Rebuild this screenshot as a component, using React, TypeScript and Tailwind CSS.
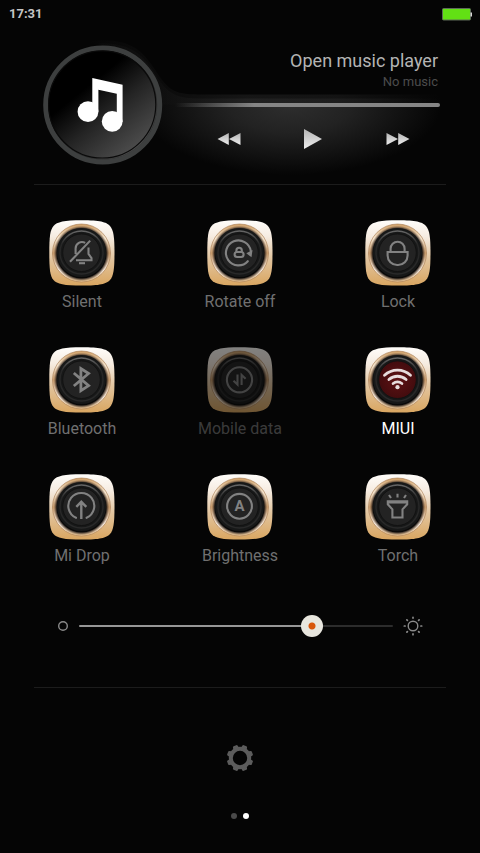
import { useState, type ReactNode } from "react";
import clsx from "clsx";

type Toggle = {
  label: string;
  state: "off" | "on" | "disabled";
  icon: ReactNode;
};

const toggles: Toggle[] = [
  {
    label: "Silent",
    state: "off",
    icon: (
      <>
        <path d="M26.600 34v-5.500a6.400 6.400 0 0 1 9.600-5.600M39.500 27.500V34l3 4v2.200H27M21 41.800 41.200 20.600" />
        <path d="M30 43.200h6" />
      </>
    ),
  },
  {
    label: "Rotate off",
    state: "off",
    icon: (
      <>
        <path d="M40.800 41.200A12.500 12.500 0 1 1 43.800 31" strokeLinecap="round" />
        <path d="M39.300 33.300 45.500 30 44.500 37.300z" fill="currentColor" stroke="none" />
        <rect x="27.600" y="32" width="9" height="5" rx="2.500" />
        <path d="M29.400 32v-1.600a2.700 2.700 0 0 1 5.400 0V32" />
      </>
    ),
  },
  {
    label: "Lock",
    state: "off",
    icon: (
      <path d="M25.600 32v-3.200a7 7 0 0 1 14 0V32M22.600 32h20v3.500a9.500 9.500 0 0 1-9.500 9.500h-1a9.500 9.500 0 0 1-9.500-9.500z" />
    ),
  },
  {
    label: "Bluetooth",
    state: "off",
    icon: <path d="M24.800 26 39.600 38.600 31.900 43.600V21.500l7.700 5L24.800 39" strokeWidth="2.800" />,
  },
  {
    label: "Mobile data",
    state: "disabled",
    icon: (
      <>
        <circle cx="32.500" cy="32.800" r="12.600" />
        <path d="M30.500 27.500v10l-4-3.800M34.600 38V28l4 3.800" />
      </>
    ),
  },
  {
    label: "MIUI",
    state: "on",
    icon: (
      <>
        <path
          d="M19.500 28.200a19 19 0 0 1 26 0M23.900 32.500a13 13 0 0 1 17.200 0M28.100 36.500a7 7 0 0 1 8.800 0"
          strokeWidth="2.800"
          strokeLinecap="round"
        />
        <circle cx="32.500" cy="40.200" r="2.100" fill="currentColor" stroke="none" />
      </>
    ),
  },
  {
    label: "Mi Drop",
    state: "off",
    icon: (
      <>
        <path d="M27 43.800a13 13 0 1 1 10.600 0" strokeLinecap="round" />
        <path d="M32.300 45V28M27.300 32.800l5-5 5 5" strokeWidth="2.400" />
      </>
    ),
  },
  {
    label: "Brightness",
    state: "off",
    icon: (
      <>
        <circle cx="32.500" cy="32.300" r="12.400" />
        <text
          x="32.500"
          y="37.300"
          textAnchor="middle"
          fontSize="15"
          fontWeight="700"
          fill="currentColor"
          stroke="none"
        >
          A
        </text>
      </>
    ),
  },
  {
    label: "Torch",
    state: "off",
    icon: (
      <>
        <path d="M22.800 27.300h19.400v3l-4.700 5v8.200H27.400v-8.200l-4.600-5z" />
        <path d="M23 28.500h19" />
        <path d="M24 21l2 3M32.500 19.800v3.600M41 21l-2 3" />
      </>
    ),
  },
];

function TileFace({ toggle }: { toggle: Toggle }) {
  const active = toggle.state === "on";

  return (
    <svg viewBox="0 0 66 66" className="size-[66px]" aria-hidden="true">
      {/* Gold plate */}
      <path
        d="M33 .3C51 .3 57 2 61 6 64.500 10 65.500 17 65.500 33S64.500 56 61 60C57 64 51 65.600 33 65.600S8 64 4.500 60C1 56 .3 49 .3 33S1 10 4.500 6C8 2 15 .3 33 .3z"
        fill="url(#plate)"
      />
      {/* Bevelled ring */}
      <circle cx="32.500" cy="33" r="29" fill="url(#bevel)" stroke="#a87d55" strokeOpacity=".6" strokeWidth="1" />
      <circle cx="32.500" cy="33.500" r="28.500" fill="url(#well)" />
      {/* Button cap */}
      <circle cx="32.500" cy="32.500" r="24.500" fill="#171818" />
      <circle cx="32.500" cy="32.500" r="21.500" fill="none" stroke="url(#shine)" strokeWidth="1.500" />
      <circle
        cx="32.500"
        cy="32.700"
        r="18.800"
        fill={active ? "url(#redCap)" : "#232323"}
        stroke="#121212"
        strokeWidth="1"
      />
      <g
        className={active ? "text-[#e6dcdc]" : "text-[#828282]"}
        fill="none"
        stroke="currentColor"
        strokeWidth="2.100"
      >
        {toggle.icon}
      </g>
    </svg>
  );
}

function ToggleTile({ toggle }: { toggle: Toggle }) {
  return (
    <button
      type="button"
      disabled={toggle.state === "disabled"}
      aria-pressed={toggle.state === "on"}
      className={clsx(
        "flex flex-col items-center gap-[6px] text-base leading-5",
        toggle.state === "on" ? "text-white" : "text-[#707070]",
        toggle.state === "disabled" && "opacity-50"
      )}
    >
      <TileFace toggle={toggle} />
      <span>{toggle.label}</span>
    </button>
  );
}

// Gradients shared by all the tiles
function TileGradients() {
  return (
    <svg className="absolute size-0" aria-hidden="true">
      <defs>
        <linearGradient id="plate" x1="0" y1="0" x2="0" y2="1">
          <stop offset="0" stopColor="#fffdfa" />
          <stop offset=".25" stopColor="#f6ece1" />
          <stop offset=".6" stopColor="#e2c49d" />
          <stop offset="1" stopColor="#d9a661" />
        </linearGradient>
        <linearGradient id="bevel" x1="0" y1="0" x2="0" y2="1">
          <stop offset="0" stopColor="#cf9f66" />
          <stop offset=".25" stopColor="#f6e6d0" />
          <stop offset=".5" stopColor="#c79a6a" />
          <stop offset=".8" stopColor="#fbf1e6" />
          <stop offset="1" stopColor="#e6c08c" />
        </linearGradient>
        <radialGradient id="well">
          <stop offset=".86" stopColor="#0a0908" />
          <stop offset=".91" stopColor="#2a1e18" stopOpacity=".6" />
          <stop offset=".98" stopColor="#6b4a30" stopOpacity="0" />
        </radialGradient>
        <linearGradient id="shine" x1="0" y1="0" x2="0" y2="1">
          <stop offset="0" stopColor="#666" />
          <stop offset=".3" stopColor="#262626" />
          <stop offset="1" stopColor="#292929" />
        </linearGradient>
        <radialGradient id="redCap">
          <stop offset="0" stopColor="#5e1214" />
          <stop offset="1" stopColor="#430c0e" />
        </radialGradient>
      </defs>
    </svg>
  );
}

function StatusBar() {
  return (
    <header className="flex h-7 items-center justify-between pr-2 pl-[9px] text-[13px] font-bold text-[#c4c4c4]">
      <time>17:31</time>
      <svg viewBox="0 0 31 13" className="h-[13px] w-[31px]" aria-label="Battery full">
        <rect x="1.500" y=".5" width="28" height="11.500" rx="1" fill="#62e014" stroke="#5e6b58" />
        <rect x="29.500" y="4.500" width="1.500" height="4" fill="#d8d8d8" />
      </svg>
    </header>
  );
}

function PlayerGlow() {
  return (
    <svg
      viewBox="0 0 480 156"
      preserveAspectRatio="xMidYMid slice"
      className="absolute inset-0 size-full"
      aria-hidden="true"
    >
      <defs>
        <radialGradient id="glow" gradientUnits="userSpaceOnUse" cx="0" cy="0" r="1" gradientTransform="translate(290 76) scale(150 70)">
          <stop offset="0" stopColor="#2e2e2e" />
          <stop offset=".4" stopColor="#222" />
          <stop offset="1" stopColor="#222" stopOpacity="0" />
        </radialGradient>
        <linearGradient id="edge" gradientUnits="userSpaceOnUse" x1="90" y1="0" x2="440" y2="0">
          <stop offset="0" stopColor="#1c1c1c" stopOpacity="0" />
          <stop offset=".2" stopColor="#101010" />
          <stop offset=".45" stopColor="#262626" />
          <stop offset=".7" stopColor="#222" />
          <stop offset="1" stopColor="#1c1c1c" stopOpacity="0" />
        </linearGradient>
      </defs>
      <path
        d="M90 13c38-4 52 7 66 29 12 19 18 24 42 24h242v10H160C150 40 130 20 90 15z"
        fill="url(#edge)"
        fillOpacity=".5"
      />
      <path
        d="M100 15c28 0 42 9 54 28 12 20 20 27 44 27h242v6H162C150 40 130 20 100 17z"
        fill="url(#edge)"
        fillOpacity=".7"
      />
      <path d="M150 76h290v80H150z" fill="url(#glow)" />
    </svg>
  );
}

function AlbumDisc() {
  return (
    <button type="button" aria-label="Open album" className="shrink-0 rounded-full">
      <svg viewBox="0 0 120 120" className="size-[120px]">
        <defs>
          <linearGradient id="disc" x1=".15" y1=".1" x2=".8" y2=".9">
            <stop offset=".3" stopColor="#000" />
            <stop offset=".6" stopColor="#242424" />
            <stop offset="1" stopColor="#4c4c4c" />
          </linearGradient>
        </defs>
        <circle cx="59.700" cy="60" r="57" fill="#2c2d2d" stroke="#3d3f3f" strokeWidth="5" />
        <circle cx="59.700" cy="60" r="54.300" fill="url(#disc)" />
        <circle cx="59.200" cy="59.400" r="53.600" fill="none" stroke="#0a0a0a" strokeWidth="1.200" />
        <g fill="#fff">
          <path d="M49.300 33l30.300 6.700v37h-5.800v-28l-18.400-4v22h-6.100z" />
          <circle cx="45" cy="66.700" r="10.400" />
          <circle cx="69.200" cy="76.400" r="10.400" />
        </g>
      </svg>
    </button>
  );
}

function MusicPlayer() {
  return (
    <section className="relative">
      <PlayerGlow />
      <div className="relative mx-[34px] flex gap-3 border-b border-[#1c1c1c] pt-[17px] pr-[6px] pb-[19px] pl-[9px]">
        <AlbumDisc />
        <div className="flex min-w-0 flex-1 flex-col pt-[3px]">
          <h2 className="pr-[2px] text-right text-lg leading-[26px] text-[#b4b4b4]">
            Open music player
          </h2>
          <p className="pr-[2px] text-right text-[13px] leading-4 text-[#4c4c4c]">No music</p>
          <div className="mt-[13px] h-1 rounded-r-full bg-linear-to-r from-transparent via-[#858585] via-30% to-[#858585]" />
          <div className="mt-3 ml-3 grid h-10 grid-cols-3 place-items-center">
            <button type="button" aria-label="Previous">
              <svg viewBox="0 0 24 14" className="h-[14px] w-6" fill="url(#ctl)">
                <path d="M.5 7 11.800 1v12zM12 7 23.500 1v12z" />
              </svg>
            </button>
            <button type="button" aria-label="Play">
              <svg viewBox="0 0 20 22" className="h-[22px] w-5">
                <defs>
                  <linearGradient id="ctl" x1="0" y1="0" x2="0" y2="1">
                    <stop offset="0" stopColor="#b4b4b4" />
                    <stop offset="1" stopColor="#eee" />
                  </linearGradient>
                </defs>
                <path d="M1 1l18 10L1 21z" fill="url(#ctl)" />
              </svg>
            </button>
            <button type="button" aria-label="Next">
              <svg viewBox="0 0 24 14" className="h-[14px] w-6" fill="url(#ctl)">
                <path d="M.5 1 12 7 .5 13zM12.200 1l11.300 6-11.300 6z" />
              </svg>
            </button>
          </div>
        </div>
      </div>
    </section>
  );
}

function BrightnessSlider() {
  const [level, setLevel] = useState(76);
  // The thumb is 22px wide, so its centre runs from 11px to 100% - 11px
  const fill = `calc(11px + (100% - 22px) * ${level / 100})`;

  return (
    <div className="mt-12 flex h-6 items-center justify-between gap-[10px] px-[57px]">
      <svg viewBox="0 0 12 12" className="size-3 shrink-0" fill="none" stroke="#8a8a8a" strokeWidth="1.400">
        <circle cx="6" cy="6" r="4.300" />
      </svg>
      <input
        type="range"
        aria-label="Screen brightness"
        min={0}
        max={100}
        value={level}
        onChange={(e) => setLevel(Number(e.target.value))}
        className="h-[2px] min-w-0 flex-1 appearance-none rounded-full outline-none [&::-webkit-slider-thumb]:size-[22px] [&::-webkit-slider-thumb]:appearance-none [&::-webkit-slider-thumb]:rounded-full [&::-webkit-slider-thumb]:bg-[radial-gradient(circle,#d8560a_3px,#e8e6de_4px)]"
        style={{
          background: `linear-gradient(to right, #979797 ${fill}, #2c2c2c ${fill})`,
        }}
      />
      <svg viewBox="0 0 20 20" className="size-5 shrink-0" fill="none" stroke="#8a8a8a" strokeWidth="1.400">
        <circle cx="10" cy="10" r="4.800" />
        {[0, 45, 90, 135, 180, 225, 270, 315].map((angle) => (
          <path
            key={angle}
            d="M10 1.300v.8"
            strokeWidth="1.700"
            strokeLinecap="round"
            transform={`rotate(${angle} 10 10)`}
          />
        ))}
      </svg>
    </div>
  );
}

function GearIcon() {
  return (
    <svg viewBox="0 0 28 28" className="size-7" fill="#5c5c5c">
      <circle cx="14" cy="14" r="9.200" fill="none" stroke="#5c5c5c" strokeWidth="4" />
      {[22.5, 67.5, 112.5, 157.5, 202.5, 247.5, 292.5, 337.5].map((angle) => (
        <path
          key={angle}
          d="M10.800 5l.7-3.400q.2-.9 1.100-.9h2.800q.9 0 1.100.9l.7 3.400z"
          transform={`rotate(${angle} 14 14)`}
        />
      ))}
    </svg>
  );
}

function App() {
  return (
    <main className="flex min-h-screen flex-col bg-[#050505] font-['Roboto',sans-serif]">
      <StatusBar />
      <MusicPlayer />
      <TileGradients />

      {/* Quick toggles */}
      <section className="grid grid-cols-3 gap-y-[35px] px-[3px] pt-[35px]">
        {toggles.map((toggle) => (
          <ToggleTile key={toggle.label} toggle={toggle} />
        ))}
      </section>

      <BrightnessSlider />

      <footer className="mt-[49px] flex flex-col items-center">
        <hr className="w-full max-w-[calc(100%-68px)] border-[#1c1c1c]" />
        <button type="button" aria-label="Settings" className="mt-[50px] grid size-10 place-items-center">
          <GearIcon />
        </button>
        <div className="mt-[35px] flex gap-[6px]">
          <span className="size-[6px] rounded-full bg-[#4a4a4a]" />
          <span className="size-[6px] rounded-full bg-white" />
        </div>
      </footer>
    </main>
  );
}

export default App;
